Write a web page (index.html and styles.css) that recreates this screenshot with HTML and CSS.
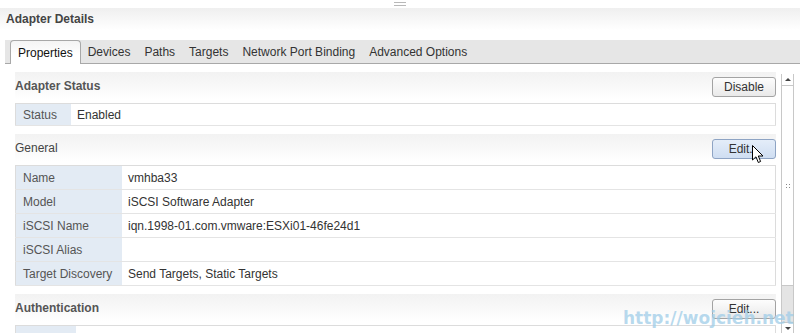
FILE: index.html
```html
<!DOCTYPE html>
<html lang="en">
<head>
    <meta charset="UTF-8">
    <title>Adapter Details</title>
    <link rel="stylesheet" href="styles.css">
</head>
<body>
<div class="page">
    <div class="grip"><span></span></div>

    <div class="panel-title">Adapter Details</div>

    <div class="tabs">
        <div class="tab active">Properties</div>
        <div class="tab">Devices</div>
        <div class="tab">Paths</div>
        <div class="tab">Targets</div>
        <div class="tab">Network Port Binding</div>
        <div class="tab">Advanced Options</div>
    </div>

    <div class="body-row">
        <div class="main">
            <div class="section">
                <div class="section-head">
                    <span>Adapter Status</span>
                    <button class="btn">Disable</button>
                </div>
                <table class="props props-status">
                    <tr><td class="label">Status</td><td>Enabled</td></tr>
                </table>
            </div>

            <div class="section">
                <div class="section-head">
                    <span class="plain">General</span>
                    <button class="btn hover">Edit...</button>
                </div>
                <table class="props props-general">
                    <tr><td class="label">Name</td><td>vmhba33</td></tr>
                    <tr><td class="label">Model</td><td>iSCSI Software Adapter</td></tr>
                    <tr><td class="label">iSCSI Name</td><td>iqn.1998-01.com.vmware:ESXi01-46fe24d1</td></tr>
                    <tr><td class="label">iSCSI Alias</td><td></td></tr>
                    <tr><td class="label">Target Discovery</td><td>Send Targets, Static Targets</td></tr>
                </table>
            </div>

            <div class="section">
                <div class="section-head">
                    <span>Authentication</span>
                    <button class="btn">Edit...</button>
                </div>
                <table class="props props-auth">
                    <tr><td class="label"></td><td></td></tr>
                </table>
            </div>
        </div>

        <div class="scrollbar">
            <div class="arrow up"></div>
            <div class="thumb"><span class="dots"></span></div>
            <div class="track"></div>
            <div class="arrow down"></div>
        </div>
    </div>

    <!-- mouse pointer over the Edit button -->
    <svg class="pointer" width="12" height="19" viewBox="0 0 12 19">
        <path d="M0.5 0.5 L0.5 15 L4 11.8 L6.3 17.5 L8.6 16.5 L6.3 11 L11 11 Z" fill="#fff" stroke="#000" stroke-width="1"/>
    </svg>

    <div class="watermark">http://wojcieh.net</div>
</div>
</body>
</html>
```

FILE: styles.css
```css
body {
    font-family: "Liberation Sans", Arial, sans-serif;
    font-size: 12px;
    color: #333;
    margin: 0;
    background: #fff;
}
.page {
    height: 333px;
    overflow: hidden;
    position: relative;
}
.grip {
    height: 8px;
    display: flex;
    justify-content: center;
}
.grip span {
    width: 12px;
    height: 2px;
    margin-top: 2px;
    border-top: 1px solid #b8b8b8;
    border-bottom: 1px solid #b8b8b8;
}
.panel-title {
    height: 22px;
    line-height: 22px;
    padding-left: 6px;
    font-weight: bold;
    color: #444;
    background: linear-gradient(#efefef, #fff);
    margin-bottom: 10px;
}
.tabs {
    margin-left: 5px;
    height: 23px;
    padding-left: 5px;
    display: flex;
    align-items: flex-end;
    background: #e6e6e6;
    border-bottom: 1px solid #a8a8a8;
}
.tab {
    height: 23px;
    line-height: 25px;
    padding: 0 7px;
    color: #333;
    white-space: nowrap;
}
.tab.active {
    height: 22px;
    line-height: 24px;
    margin-bottom: -1px;
    background: linear-gradient(#f4f4f4, #fff 60%);
    border: 1px solid #a8a8a8;
    border-bottom: none;
    border-radius: 4px 4px 0 0;
    color: #111;
    padding-bottom: 1px;
}
.body-row {
    display: flex;
}
.main {
    flex: 1;
    margin-left: 15px;
    margin-right: 5px;
}
.section {
    margin-top: 8px;
}
.section-head {
    height: 28px;
    display: flex;
    align-items: center;
    justify-content: space-between;
    background: linear-gradient(#f2f2f2, #fff);
    font-weight: bold;
    color: #555;
}
.section-head .plain {
    font-weight: normal;
    color: #444;
}
.btn {
    width: 64px;
    height: 20px;
    padding: 0;
    font-family: "Liberation Sans", Arial, sans-serif;
    font-size: 12px;
    color: #333;
    background: linear-gradient(#fdfdfd, #e9e9e9);
    border: 1px solid #a3a3a3;
    border-radius: 3px;
    margin-top: 1px;
}
.btn.hover {
    background: linear-gradient(#e4edf9, #cfdef2);
    border-color: #8ea4c4;
}
.props {
    width: 100%;
    margin-top: 3px;
    border-collapse: collapse;
    border: 1px solid #dcdcdc;
}
.props td {
    height: 23px;
    padding: 0 0 0 6px;
    border-bottom: 1px solid #e4e4e4;
    color: #333;
}
.props-status td {
    height: 21px;
}
.props td.label {
    background: #e3ebf4;
    color: #555;
    padding-left: 7px;
}
.props-status .label {
    width: 48px;
}
.props-general .label {
    width: 99px;
}
.props-auth .label {
    width: 53px;
}
.scrollbar {
    width: 11px;
    margin-top: 10px;
    margin-right: 6px;
    height: 260px;
    display: flex;
    flex-direction: column;
    border-left: 1px solid #c8c8c8;
    border-right: 1px solid #c8c8c8;
}
.arrow {
    height: 11px;
    position: relative;
    border-bottom: 1px solid #c8c8c8;
}
.arrow.down {
    border-bottom: none;
    border-top: 1px solid #c8c8c8;
}
.arrow::after {
    content: "";
    position: absolute;
    left: 3px;
    top: 4px;
    border-left: 3px solid transparent;
    border-right: 3px solid transparent;
}
.arrow.up::after {
    border-bottom: 3px solid #444;
}
.arrow.down::after {
    border-top: 3px solid #444;
}
.thumb {
    height: 199px;
    display: flex;
    align-items: center;
    justify-content: center;
    border-bottom: 1px solid #c8c8c8;
}
.dots {
    width: 6px;
    height: 5px;
    background:
        radial-gradient(circle, #888 0.8px, transparent 1px) 0 0 / 3px 3px;
}
.track {
    flex: 1;
    background: #e4e4e4;
}
.pointer {
    position: absolute;
    left: 752px;
    top: 145px;
}
.watermark {
    position: absolute;
    left: 623px;
    top: 308px;
    font-family: "DejaVu Sans", sans-serif;
    font-weight: bold;
    font-size: 17px;
    line-height: 20px;
    color: rgba(160, 205, 232, 0.75);
    white-space: nowrap;
}
```
